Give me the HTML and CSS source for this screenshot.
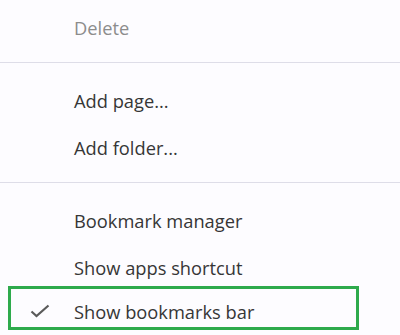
FILE: index.html
```html
<!DOCTYPE html>
<html>
<head>
<meta charset="utf-8">
<link rel="stylesheet" href="styles.css">
</head>
<body>
<div class="menu">
  <div class="item disabled">Delete</div>
  <div class="sep"></div>
  <div class="item">Add page...</div>
  <div class="item">Add folder...</div>
  <div class="sep"></div>
  <div class="item">Bookmark manager</div>
  <div class="item">Show apps shortcut</div>
  <div class="item checked">
    <svg class="check" width="20" height="14" viewBox="0 0 20 14"><polyline points="1.5,7.5 6.5,12 18.5,1.5" fill="none" stroke="#5a5a5a" stroke-width="2.2"/></svg>
    Show bookmarks bar
    <div class="highlight"></div>
  </div>
</div>
</body>
</html>
```
FILE: styles.css
```css
html, body {
  margin: 0;
  padding: 0;
  background: #fdfcff;
  width: 400px;
  height: 335px;
  overflow: hidden;
}
.menu {
  padding-top: 4px;
  font-family: "Open Sans", sans-serif;
  font-size: 18.3px;
  color: #363636;
}
.item {
  position: relative;
  height: 47px;
  line-height: 47px;
  padding-left: 74px;
  white-space: nowrap;
}
.item.disabled {
  color: #8c8c8c;
}
.item.checked {
  line-height: 41px;
}
.sep {
  height: 1px;
  background: #dedde8;
  margin: 11px 0 14px;
}
.check {
  position: absolute;
  left: 30px;
  top: 13px;
}
.highlight {
  position: absolute;
  left: 8px;
  top: -5px;
  width: 345px;
  height: 38px;
  border: 3px solid #2eaa4c;
}
```
